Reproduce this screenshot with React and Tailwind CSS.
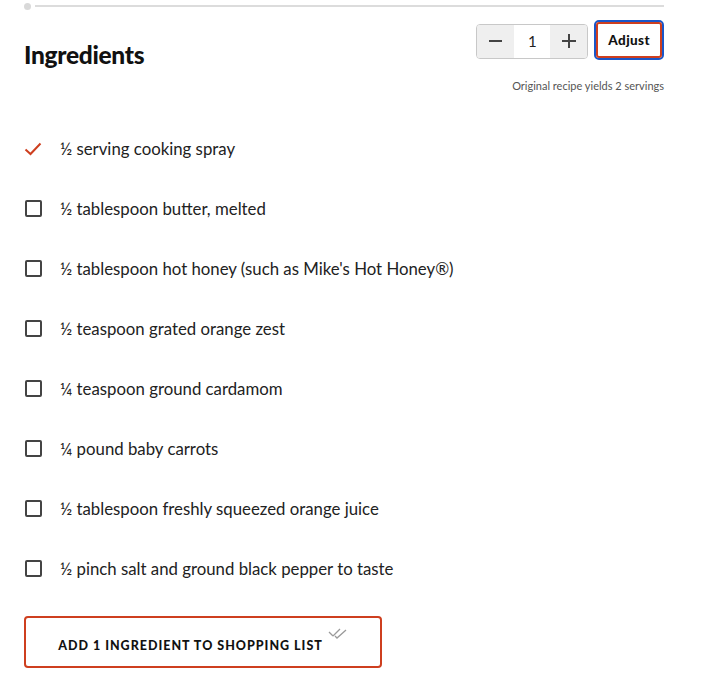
import { useState } from 'react';

const INGREDIENTS = [
  { text: '½ serving cooking spray', checked: true },
  { text: '½ tablespoon butter, melted' },
  { text: "½ tablespoon hot honey (such as Mike's Hot Honey®)" },
  { text: '½ teaspoon grated orange zest' },
  { text: '¼ teaspoon ground cardamom' },
  { text: '¼ pound baby carrots' },
  { text: '½ tablespoon freshly squeezed orange juice' },
  { text: '½ pinch salt and ground black pepper to taste' },
];

function Check() {
  return (
    <svg width="18" height="14" viewBox="0 0 18 14" className="text-[#ce3f1f]">
      <path d="M1.5 7.5 L6.5 12 L16.5 1.5" fill="none" stroke="currentColor" strokeWidth="2" />
    </svg>
  );
}

export default function App() {
  const [servings, setServings] = useState(1);
  const [items, setItems] = useState(INGREDIENTS);

  const count = items.filter((i) => i.checked).length;

  return (
    <div className="w-[709px] h-[687px] bg-white font-['Lato','Noto_Sans',sans-serif] text-[#222] overflow-hidden">
      <div className="pl-6 pr-[45px]">
        {/* progress line */}
        <div className="flex items-center h-[12px]">
          <div className="w-[7px] h-[7px] rounded-full bg-[#d9d9d9]" />
          <div className="flex-1 h-[2px] bg-[#dcdcdc] ml-[4px]" />
        </div>

        {/* header */}
        <div className="flex justify-between items-start mt-[8px]">
          <h2 className="mt-[17px] text-[24.5px] font-black tracking-[-0.3px] text-[#111]">Ingredients</h2>
          <div className="flex flex-col items-end">
            <div className="flex items-center">
              <div className="flex h-[35px] mt-[2px] border border-[#c8c8c8] rounded-[4px] overflow-hidden">
                <button
                  onClick={() => setServings(Math.max(1, servings - 1))}
                  className="w-[37px] bg-[#efefef] flex items-center justify-center"
                >
                  <span className="block w-[13px] h-[2px] bg-[#444]" />
                </button>
                <div className="w-[36px] bg-white flex items-center justify-center text-[15px] text-[#222]">{servings}</div>
                <button
                  onClick={() => setServings(servings + 1)}
                  className="w-[37px] bg-[#efefef] flex items-center justify-center relative"
                >
                  <span className="block w-[14px] h-[2px] bg-[#444]" />
                  <span className="absolute w-[2px] h-[14px] bg-[#444]" />
                </button>
              </div>
              <div className="ml-[6px] rounded-[5px] border-2 border-[#1a56c8]">
                <button className="h-[36px] px-[10px] border-2 border-[#ce3f1f] rounded-[3px] bg-white text-[13.5px] font-black text-[#111] tracking-[0.4px]">
                  Adjust
                </button>
              </div>
            </div>
            <div className="mt-[18px] text-[11px] text-[#555]">Original recipe yields 2 servings</div>
          </div>
        </div>

        {/* list */}
        <ul className="mt-[42px] flex flex-col gap-[36px]">
          {items.map((it, idx) => (
            <li
              key={idx}
              className="flex items-center h-[24px] cursor-pointer"
              onClick={() =>
                setItems(items.map((x, j) => (j === idx ? { ...x, checked: !x.checked } : x)))
              }
            >
              <div className="w-[36px] flex items-center">
                {it.checked ? (
                  <Check />
                ) : (
                  <span className="ml-[1px] block w-[17px] h-[17px] border-2 border-[#444] rounded-[2px]" />
                )}
              </div>
              <span className="text-[16.8px] text-[#222]">{it.text}</span>
            </li>
          ))}
        </ul>

        {/* button */}
        <button className="mt-[35px] w-[358px] h-[52px] border-2 border-[#ce3f1f] rounded-[4px] flex items-center justify-center bg-white">
          <span className="mt-[10px] text-[12.5px] font-black tracking-[1px] text-[#111]">
            ADD {count} INGREDIENT{count === 1 ? '' : 'S'} TO SHOPPING LIST
          </span>
          <svg width="20" height="12" viewBox="0 0 20 12" className="ml-[5px] mb-[16px] text-[#9a9a9a]">
            <path d="M1 4 L5 8 M5 8 L12 1 M7 8 L9 10 L18 2" fill="none" stroke="currentColor" strokeWidth="1.3" />
          </svg>
        </button>
      </div>
    </div>
  );
}
